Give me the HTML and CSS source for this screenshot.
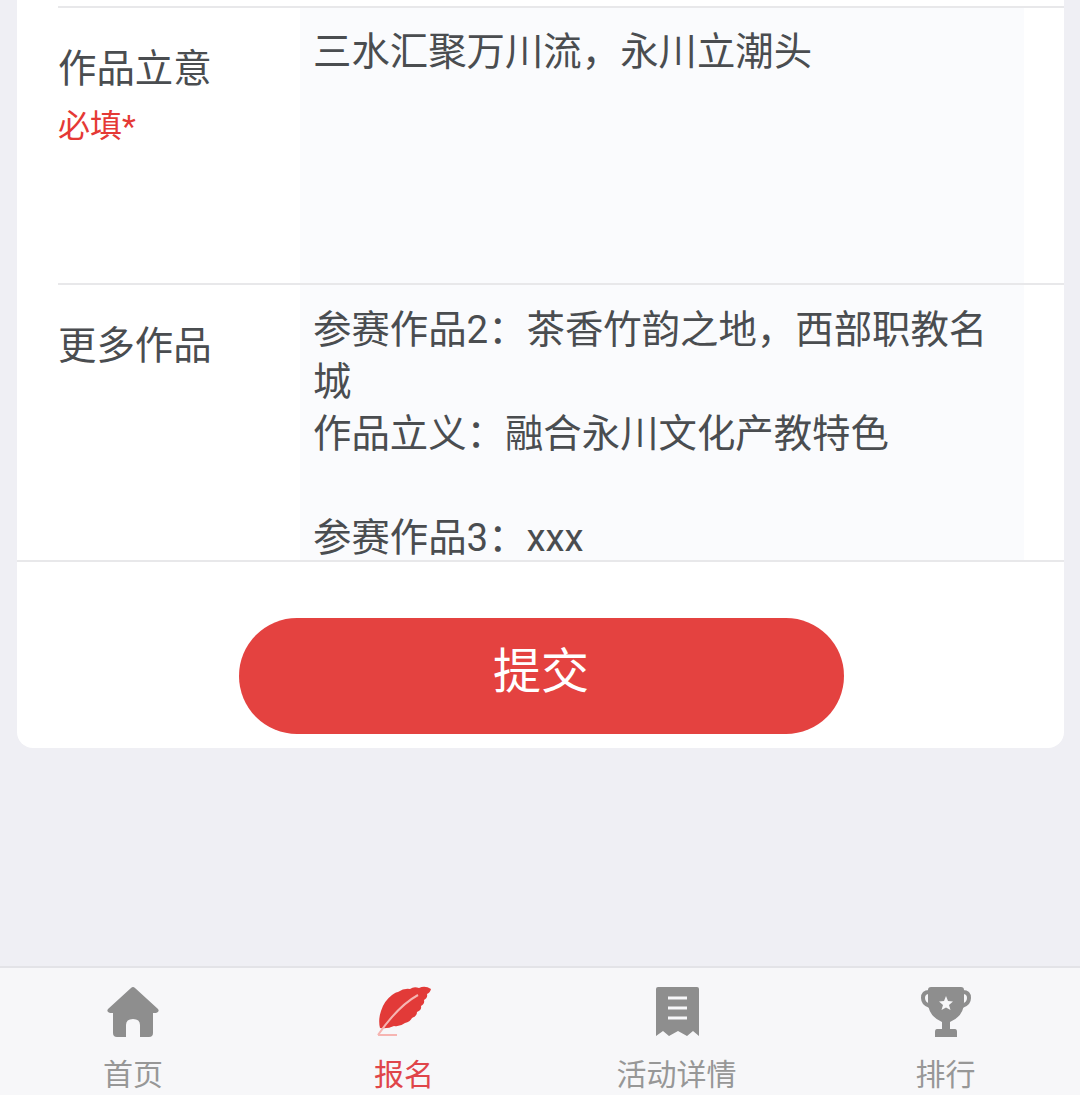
FILE: index.html
```html
<!DOCTYPE html>
<html lang="zh-CN">
<head>
<meta charset="UTF-8">
<meta name="viewport" content="width=device-width, initial-scale=1.0">
<title>报名</title>
<link rel="stylesheet" href="styles.css">
</head>
<body>

<!-- Form card -->
<main class="page">
    <form class="card">
        <div class="row">
            <div class="label">
                <div>作品立意</div>
                <div class="required">必填*</div>
            </div>
            <div class="field">三水汇聚万川流，永川立潮头</div>
        </div>
        <div class="row">
            <div class="label">
                <div>更多作品</div>
            </div>
            <div class="field">参赛作品2：茶香竹韵之地，西部职教名城<br>作品立义：融合永川文化产教特色<br><br>参赛作品3：xxx</div>
        </div>
        <div class="actions">
            <button type="button" class="submit-btn">提交</button>
        </div>
    </form>
</main>

<!-- Tab bar -->
<nav class="tabbar">
    <a class="tab" href="#">
        <svg class="tab-icon" width="56" height="52" viewBox="0 0 56 52">
            <path fill="#8e8e8e" fill-rule="evenodd" d="M28 1 Q29 1 30 2 L53 23 Q55 26 51 27 H48 V47 Q48 51 44 51 H35 V39 Q35 33 28 33 Q21 33 21 39 V51 H12 Q8 51 8 47 V27 H5 Q1 26 3 23 L26 2 Q27 1 28 1 Z"/>
        </svg>
        <span>首页</span>
    </a>
    <a class="tab active" href="#">
        <svg class="tab-icon" width="56" height="52" viewBox="0 0 56 52">
            <path fill="#e23a38" d="M55 3 Q54 7 51 8 Q52 12 48 14 Q49 18 45 20 Q46 24 41 26 Q41 30 36 32 Q34 36 29 37 Q24 41 18 40 Q12 43 4 42 Q2 34 5 25 Q8 15 16 9 Q20 6 22 6 Q28 2 34 3 Q38 0 43 2 Q49 -1 55 3 Z"/>
            <path fill="none" stroke="#f6b5b2" stroke-width="2" d="M42 9 Q22 20 2 49 M2 49 H21"/>
        </svg>
        <span>报名</span>
    </a>
    <a class="tab" href="#">
        <svg class="tab-icon" width="56" height="52" viewBox="0 0 56 52">
            <path fill="#8e8e8e" d="M9 1 H48 Q50 1 50 3 V50 L44 45 L38 50 L29 45 L20 50 L14 45 L7 50 V3 Q7 1 9 1 Z"/>
            <path fill="none" stroke="#f7f7f9" stroke-width="3" d="M19 12 H38 M19 22 H38 M19 32 H38"/>
        </svg>
        <span>活动详情</span>
    </a>
    <a class="tab" href="#">
        <svg class="tab-icon" width="56" height="52" viewBox="0 0 56 52">
            <path fill="none" stroke="#8e8e8e" stroke-width="4" d="M11 6 Q5 6 5 12 Q5 18 12 20 M45 6 Q51 6 51 12 Q51 18 44 20"/>
            <path fill="#8e8e8e" d="M13 1 H43 Q46 1 46 4 V16 Q46 30 32 36 V43 H37 Q39 43 39 46 V51 H17 V46 Q17 43 19 43 H24 V36 Q10 30 10 16 V4 Q10 1 13 1 Z"/>
            <path fill="#f7f7f9" d="M28 10 L30 15 L35 15.500 L31 19 L32.500 24 L28 21.500 L23.500 24 L25 19 L21 15.500 L26 15 Z"/>
        </svg>
        <span>排行</span>
    </a>
</nav>

</body>
</html>
```

FILE: styles.css
```css
/* Page shell */
body {
    margin: 0;
    height: 1095px;
    display: flex;
    flex-direction: column;
    overflow: hidden;
    background-color: #efeff4;
    font-family: Roboto, "Noto Sans CJK SC", sans-serif;
    color: #4a4d50;
}

.page {
    flex: 1;
    padding: 0 16px 0 17px;
}

.card {
    padding-top: 6px;
    background-color: #fff;
    border-radius: 0 0 16px 16px;
}

/* Form rows */
.row {
    display: flex;
    height: 275px;
    margin-left: 41px;
    border-top: 2px solid #e8e8ea;
}

.label {
    width: 242px;
    padding-top: 35px;
    font-size: 38.4px;
    line-height: 52px;
}

.required {
    margin-top: 9px;
    font-size: 32px;
    line-height: 44px;
    color: #e53935;
}

.field {
    width: 697px;
    padding: 18px 14px 0 13px;
    background-color: #fafbfd;
    font-size: 38.4px;
    line-height: 52.5px;
}

.row + .row .field {
    padding-top: 19px;
    line-height: 52px;
}

/* Submit */
.actions {
    display: flex;
    justify-content: center;
    padding: 56px 0 14px;
    border-top: 2px solid #e8e8ea;
}

.submit-btn {
    width: 605px;
    height: 116px;
    padding: 0 0 18px;
    margin-left: 1px;
    border: none;
    border-radius: 58px;
    background-color: #e44240;
    color: #fff;
    font-family: inherit;
    font-size: 48px;
}

/* Tab bar */
.tabbar {
    display: grid;
    grid-template-columns: 266px 276px 269px 269px;
    height: 129px;
    box-sizing: border-box;
    border-top: 2px solid #e3e3e7;
    background-color: #f7f7f9;
}

.tab {
    display: flex;
    flex-direction: column;
    align-items: center;
    padding-top: 18px;
    color: #979797;
    text-decoration: none;
    font-size: 30px;
    line-height: 40px;
}

.tab-icon {
    margin-bottom: 17px;
}

.tab.active {
    color: #e0454a;
}
```
